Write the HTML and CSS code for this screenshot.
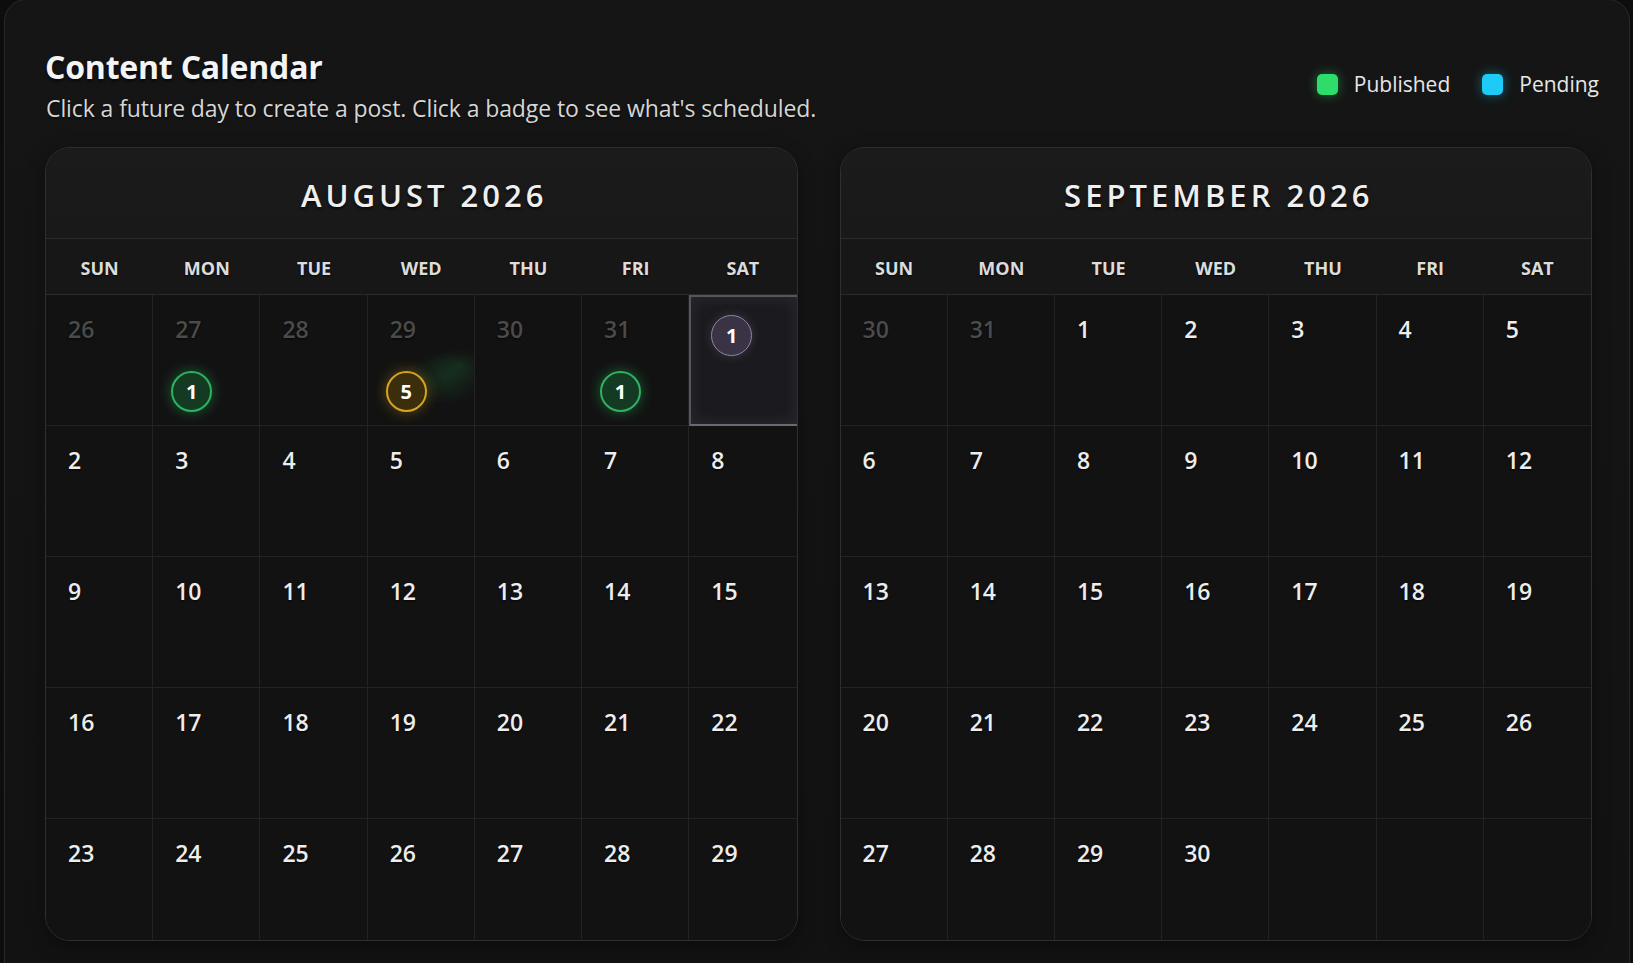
FILE: index.html
```html
<!DOCTYPE html>
<html lang="en">
<head>
<meta charset="utf-8">
<title>Content Calendar</title>
<link rel="stylesheet" href="styles.css">
</head>
<body>
<div class="panel">
  <div class="head">
    <div class="titles">
      <h1 class="title">Content Calendar</h1>
      <p class="sub">Click a future day to create a post. Click a badge to see what's scheduled.</p>
    </div>
    <div class="legend">
      <div class="leg"><span class="sq sq-green"></span><span>Published</span></div>
      <div class="leg"><span class="sq sq-blue"></span><span>Pending</span></div>
    </div>
  </div>

  <div class="months">
    <section class="card">
      <div class="card-head">AUGUST 2026</div>
      <div class="dow"><span>SUN</span><span>MON</span><span>TUE</span><span>WED</span><span>THU</span><span>FRI</span><span>SAT</span></div>
      <div class="days">
        <div class="cell"><span class="num dim">26</span></div>
        <div class="cell"><span class="num dim">27</span><span class="badge b-green">1</span></div>
        <div class="cell"><span class="num dim">28</span></div>
        <div class="cell streak"><span class="num dim">29</span><span class="badge b-yellow">5</span></div>
        <div class="cell"><span class="num dim">30</span></div>
        <div class="cell"><span class="num dim">31</span><span class="badge b-green">1</span></div>
        <div class="cell sel"><span class="badge b-purple">1</span></div>

        <div class="cell"><span class="num">2</span></div>
        <div class="cell"><span class="num">3</span></div>
        <div class="cell"><span class="num">4</span></div>
        <div class="cell"><span class="num">5</span></div>
        <div class="cell"><span class="num">6</span></div>
        <div class="cell"><span class="num">7</span></div>
        <div class="cell"><span class="num">8</span></div>

        <div class="cell"><span class="num">9</span></div>
        <div class="cell"><span class="num">10</span></div>
        <div class="cell"><span class="num">11</span></div>
        <div class="cell"><span class="num">12</span></div>
        <div class="cell"><span class="num">13</span></div>
        <div class="cell"><span class="num">14</span></div>
        <div class="cell"><span class="num">15</span></div>

        <div class="cell"><span class="num">16</span></div>
        <div class="cell"><span class="num">17</span></div>
        <div class="cell"><span class="num">18</span></div>
        <div class="cell"><span class="num">19</span></div>
        <div class="cell"><span class="num">20</span></div>
        <div class="cell"><span class="num">21</span></div>
        <div class="cell"><span class="num">22</span></div>

        <div class="cell"><span class="num">23</span></div>
        <div class="cell"><span class="num">24</span></div>
        <div class="cell"><span class="num">25</span></div>
        <div class="cell"><span class="num">26</span></div>
        <div class="cell"><span class="num">27</span></div>
        <div class="cell"><span class="num">28</span></div>
        <div class="cell"><span class="num">29</span></div>
      </div>
    </section>

    <section class="card">
      <div class="card-head">SEPTEMBER 2026</div>
      <div class="dow"><span>SUN</span><span>MON</span><span>TUE</span><span>WED</span><span>THU</span><span>FRI</span><span>SAT</span></div>
      <div class="days">
        <div class="cell"><span class="num dim">30</span></div>
        <div class="cell"><span class="num dim">31</span></div>
        <div class="cell"><span class="num">1</span></div>
        <div class="cell"><span class="num">2</span></div>
        <div class="cell"><span class="num">3</span></div>
        <div class="cell"><span class="num">4</span></div>
        <div class="cell"><span class="num">5</span></div>

        <div class="cell"><span class="num">6</span></div>
        <div class="cell"><span class="num">7</span></div>
        <div class="cell"><span class="num">8</span></div>
        <div class="cell"><span class="num">9</span></div>
        <div class="cell"><span class="num">10</span></div>
        <div class="cell"><span class="num">11</span></div>
        <div class="cell"><span class="num">12</span></div>

        <div class="cell"><span class="num">13</span></div>
        <div class="cell"><span class="num">14</span></div>
        <div class="cell"><span class="num">15</span></div>
        <div class="cell"><span class="num">16</span></div>
        <div class="cell"><span class="num">17</span></div>
        <div class="cell"><span class="num">18</span></div>
        <div class="cell"><span class="num">19</span></div>

        <div class="cell"><span class="num">20</span></div>
        <div class="cell"><span class="num">21</span></div>
        <div class="cell"><span class="num">22</span></div>
        <div class="cell"><span class="num">23</span></div>
        <div class="cell"><span class="num">24</span></div>
        <div class="cell"><span class="num">25</span></div>
        <div class="cell"><span class="num">26</span></div>

        <div class="cell"><span class="num">27</span></div>
        <div class="cell"><span class="num">28</span></div>
        <div class="cell"><span class="num">29</span></div>
        <div class="cell"><span class="num">30</span></div>
        <div class="cell"></div>
        <div class="cell"></div>
        <div class="cell"></div>
      </div>
    </section>
  </div>
</div>
</body>
</html>
```
FILE: styles.css
```css
* { box-sizing: border-box; }
html, body { margin: 0; height: 100%; overflow: hidden; }
body {
  background: #0d0d0d;
  font-family: "Open Sans", "Noto Sans", "DejaVu Sans", sans-serif;
  color: #ececec;
}
.panel {
  margin: -1px 3px 0 4px;
  min-height: 1010px;
  border: 1px solid #282828;
  border-radius: 22px;
  background: linear-gradient(180deg, #151515 0%, #121212 100%);
  padding: 47px 37px 0 40px;
}
.head {
  display: flex;
  justify-content: space-between;
  align-items: flex-start;
  height: 100px;
}
.title {
  margin: 0;
  font-size: 32px;
  font-weight: 700;
  line-height: 40px;
  color: #f4f4f4;
  letter-spacing: -0.2px;
  text-shadow: 0 2px 3px rgba(0,0,0,.7);
}
.sub {
  margin: 6px 0 0 1px;
  font-size: 23px;
  line-height: 30px;
  color: #d6d6d6;
  letter-spacing: -0.1px;
  text-shadow: 0 1px 2px rgba(0,0,0,.7);
}
.legend {
  display: flex;
  gap: 32px;
  margin-top: 23px;
  margin-right: -7px;
}
.leg {
  display: flex;
  align-items: center;
  gap: 16px;
  font-size: 21px;
  color: #e6e6e6;
}
.sq {
  width: 21px;
  height: 21px;
  border-radius: 5px;
  display: inline-block;
}
.sq-green { background: #2fdc6b; box-shadow: 0 0 12px rgba(47,220,107,.45); }
.sq-blue { background: #1ecbf6; box-shadow: 0 0 12px rgba(30,203,246,.45); }

.months {
  display: grid;
  grid-template-columns: 1fr 1fr;
  gap: 42px;
}
.card {
  height: 794px;
  border: 1px solid #2f2f2f;
  border-radius: 25px;
  overflow: hidden;
  background: #121212;
  box-shadow: 0 6px 18px rgba(0,0,0,.35);
}
.card-head {
  height: 91px;
  display: flex;
  align-items: center;
  justify-content: center;
  background: linear-gradient(180deg, #1b1b1b, #191919);
  border-bottom: 1px solid #2c2c2c;
  font-size: 31px;
  font-weight: 600;
  letter-spacing: 4px;
  color: #efefef;
  padding: 4px 0 0 6px;
  text-shadow: 0 2px 3px rgba(0,0,0,.7);
}
.dow {
  display: grid;
  grid-template-columns: repeat(7, 1fr);
  height: 56px;
  align-items: center;
  background: #171717;
  border-bottom: 1px solid #2a2a2a;
}
.dow span {
  text-align: center;
  font-size: 18px;
  font-weight: 700;
  color: #dcdcdc;
  padding-top: 2px;
  text-shadow: 0 1px 2px rgba(0,0,0,.7);
}
.days {
  display: grid;
  grid-template-columns: repeat(7, 1fr);
  grid-auto-rows: 131px;
}
.cell {
  display: flex;
  flex-direction: column;
  align-items: flex-start;
  padding: 17px 0 0 22px;
  border-right: 1px solid #232323;
  border-bottom: 1px solid #232323;
  background: #121212;
}
.cell:nth-child(7n) { border-right: none; }
.num {
  font-size: 23px;
  font-weight: 600;
  line-height: 34px;
  color: #ededed;
  text-shadow: 0 1px 2px rgba(0,0,0,.7);
}
.num.dim { color: #4b4b4b; }
.badge {
  width: 41px;
  height: 41px;
  border-radius: 50%;
  display: flex;
  align-items: center;
  justify-content: center;
  font-size: 20px;
  font-weight: 700;
  color: #ffffff;
  margin-top: 25px;
  margin-left: -4px;
  border: 2px solid;
}
.b-green {
  border-color: #2db35f;
  background: #143a23;
  box-shadow: 0 0 14px rgba(40,190,95,.45);
}
.b-yellow {
  border-color: #d7a21f;
  background: #3b2e0d;
  box-shadow: 0 0 14px rgba(215,162,31,.4);
}
.b-purple {
  margin: 1px 0 0 1px;
  border: 1.5px solid #8d84a3;
  background: #3a3346;
  box-shadow: 0 0 10px rgba(150,140,180,.25);
}
.streak {
  background:
    radial-gradient(ellipse 55px 34px at 72% 64%, rgba(36,150,70,.20), transparent 75%),
    radial-gradient(ellipse 40px 22px at 86% 54%, rgba(36,150,70,.14), transparent 75%),
    #121212;
}
.sel {
  background: #1b1b1f;
  border: 2px solid #55555f;
  border-right-color: #66737a;
  border-bottom-color: #6a6a74;
  box-shadow: inset 0 0 16px rgba(200,200,225,.09);
  padding: 17px 0 0 19px;
}
```
